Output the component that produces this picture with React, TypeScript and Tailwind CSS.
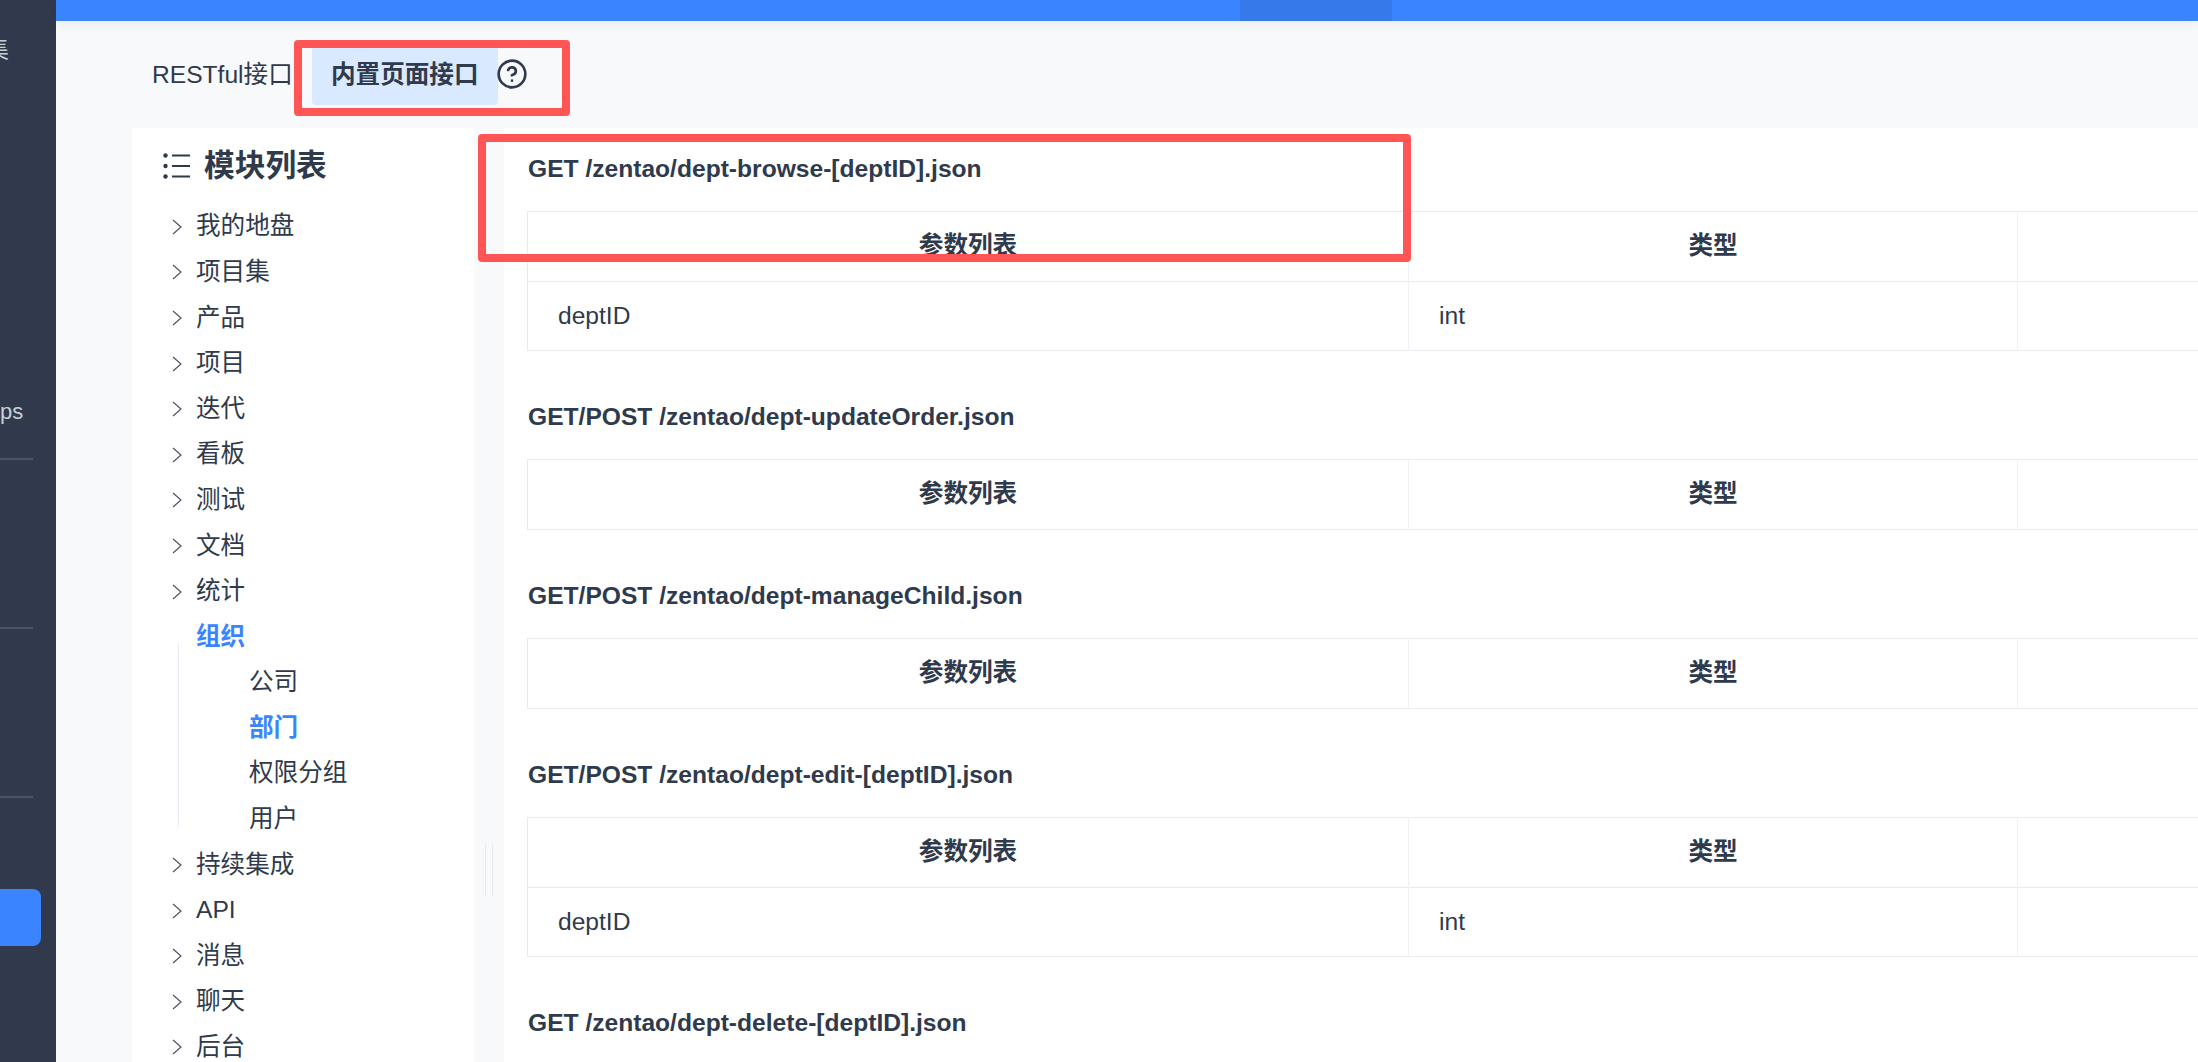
import React from "react";
import { CircleHelp } from "lucide-react";

const FONT = '"Liberation Sans","Noto Sans CJK SC",sans-serif';

const tree: { label: string; level: number; chevron?: boolean; active?: boolean }[] = [
  { label: "我的地盘", level: 0, chevron: true },
  { label: "项目集", level: 0, chevron: true },
  { label: "产品", level: 0, chevron: true },
  { label: "项目", level: 0, chevron: true },
  { label: "迭代", level: 0, chevron: true },
  { label: "看板", level: 0, chevron: true },
  { label: "测试", level: 0, chevron: true },
  { label: "文档", level: 0, chevron: true },
  { label: "统计", level: 0, chevron: true },
  { label: "组织", level: 0, active: true },
  { label: "公司", level: 1 },
  { label: "部门", level: 1, active: true },
  { label: "权限分组", level: 1 },
  { label: "用户", level: 1 },
  { label: "持续集成", level: 0, chevron: true },
  { label: "API", level: 0, chevron: true },
  { label: "消息", level: 0, chevron: true },
  { label: "聊天", level: 0, chevron: true },
  { label: "后台", level: 0, chevron: true },
];

const sections: { title: string; row?: [string, string]; noTable?: boolean }[] = [
  { title: "GET /zentao/dept-browse-[deptID].json", row: ["deptID", "int"] },
  { title: "GET/POST /zentao/dept-updateOrder.json" },
  { title: "GET/POST /zentao/dept-manageChild.json" },
  { title: "GET/POST /zentao/dept-edit-[deptID].json", row: ["deptID", "int"] },
  { title: "GET /zentao/dept-delete-[deptID].json", noTable: true },
];

function Chevron() {
  return (
    <svg width="10" height="16" viewBox="0 0 10 16" fill="none" className="shrink-0">
      <path d="M1 1l8 7-8 7" stroke="#4b5563" strokeWidth="1.2" />
    </svg>
  );
}

function ListIcon() {
  return (
    <svg width="27" height="26" viewBox="0 0 27 26" fill="none" className="shrink-0">
      <circle cx="2.5" cy="2.5" r="2.2" fill="#2f3a4c" />
      <circle cx="2.5" cy="13" r="2.2" fill="#2f3a4c" />
      <circle cx="2.5" cy="23.5" r="2.2" fill="#2f3a4c" />
      <path d="M9 2.5h18M9 13h18M9 23.5h18" stroke="#2f3a4c" strokeWidth="2" />
    </svg>
  );
}

function ApiTable({ row }: { row?: [string, string] }) {
  return (
    <table className="w-[2100px] table-fixed border-collapse border-y border-l border-[#e9e9ef] text-[24.6px]">
      <colgroup>
        <col className="w-[881px]" />
        <col className="w-[609px]" />
        <col />
      </colgroup>
      <thead>
        <tr className="h-[70px] border-b border-[#e9e9ef]">
          <th className="border-r border-[#f1f1f5] font-bold">参数列表</th>
          <th className="border-r border-[#f1f1f5] font-bold">类型</th>
          <th />
        </tr>
      </thead>
      {row && (
        <tbody>
          <tr className="h-[69px]">
            <td className="border-r border-[#f1f1f5] pl-[30px]">{row[0]}</td>
            <td className="border-r border-[#f1f1f5] pl-[30px]">{row[1]}</td>
            <td />
          </tr>
        </tbody>
      )}
    </table>
  );
}

export default function App() {
  return (
    <div
      className="relative flex h-[1062px] w-[2198px] overflow-hidden bg-[#f8f9fb] text-[#2f3a4c]"
      style={{ fontFamily: FONT }}
    >
      <aside className="flex w-[56px] shrink-0 flex-col overflow-hidden bg-[#303a4c] text-[#c9ced6]">
        <div className="mt-[38px] h-[24px] w-[9px] overflow-hidden text-[24px] leading-[24px]">
          <span className="block w-[24px] -translate-x-[15px]">集</span>
        </div>
        <div className="mt-[338px] h-[24px] w-[23px] overflow-hidden text-right text-[22px] leading-[24px]">ps</div>
        <div className="mt-[34px] h-[2px] w-[33px] bg-[#4b5564]" />
        <div className="mt-[167px] h-[2px] w-[33px] bg-[#4b5564]" />
        <div className="mt-[167px] h-[2px] w-[33px] bg-[#4b5564]" />
        <div className="mt-[91px] h-[57px] w-[41px] rounded-r-lg bg-[#3a85ff]" />
      </aside>

      <div className="flex min-w-0 flex-1 flex-col">
        <header className="relative z-10 flex h-[21px] shrink-0 bg-[#3a85ff] pl-[1184px] shadow-[0_2px_14px_rgba(0,0,0,0.07)]">
          <div className="h-full w-[152px] bg-[#3679e8]" />
        </header>

        <nav className="flex h-[107px] shrink-0 items-start pl-[96px] pt-[22px] text-[24.6px]">
          <span className="mr-[19px] mt-[14px] h-[36px] leading-[36px]">RESTful接口</span>
          <span className="flex h-[62px] w-[186px] items-center justify-center rounded-b bg-[#d9e9ff] pt-[2px] font-bold">内置页面接口</span>
          <CircleHelp size={32} strokeWidth={2} className="-ml-[2px] mt-[15px] text-[#2f3a4c]" />
        </nav>

        <main className="flex min-h-0 flex-1 pl-[76px]">
          <section className="w-[342px] shrink-0 bg-white pl-[31px] pt-[25px]">
            <h2 className="mb-[25px] flex h-[26px] items-center gap-[14px] text-[30.7px] font-bold leading-[26px]">
              <ListIcon />
              <span>模块列表</span>
            </h2>
            <ul className="relative -ml-[1px] text-[24.6px]">
              <span className="absolute left-[16px] top-[440px] h-[183px] w-px bg-[#e8eaf3]" />
              {tree.map((item) => (
                <li
                  key={item.label}
                  className={`flex h-[45.6px] items-center ${item.level === 1 ? "pl-[87px]" : item.chevron ? "gap-[14px] pl-[10px]" : "pl-[34px]"} ${item.active ? "font-bold text-[#3a85ff]" : ""}`}
                >
                  {item.chevron && <Chevron />}
                  <span>{item.label}</span>
                </li>
              ))}
            </ul>
          </section>

          <div className="flex w-[30px] shrink-0 items-start justify-center gap-[6px] pt-[716px]">
            <span className="h-[53px] w-px bg-[#e8ebf0]" />
            <span className="h-[53px] w-px bg-[#e8ebf0]" />
          </div>

          <section className="min-w-0 flex-1 overflow-hidden bg-white pl-[23px] pt-[25px]">
            {sections.map((s) => (
              <div key={s.title} className="mb-[50px]">
                <h3 className="mb-[26px] h-[32px] pl-[1px] text-[24.6px] font-bold leading-[32px]">{s.title}</h3>
                {!s.noTable && <ApiTable row={s.row} />}
              </div>
            ))}
          </section>
        </main>
      </div>

      <div className="pointer-events-none absolute left-[294px] top-[40px] h-[76px] w-[276px] rounded border-8 border-[#ff5555]" />
      <div className="pointer-events-none absolute left-[478px] top-[134px] h-[128px] w-[933px] rounded border-8 border-[#ff5555]" />
    </div>
  );
}
